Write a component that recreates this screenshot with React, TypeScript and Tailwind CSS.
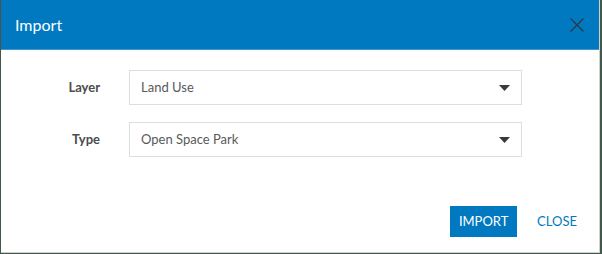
import { X } from 'lucide-react';

function SelectBox({ value }: { value: string }) {
  return (
    <div className="flex h-[35px] w-[393px] items-center justify-between border border-[#dedede] bg-white pl-[11px] pr-[11px]">
      <span className="text-[13px] text-[#595959]">{value}</span>
      <svg width="11" height="6" viewBox="0 0 11 6">
        <path d="M0 0 H11 L5.5 6 Z" fill="#3a3a3a" />
      </svg>
    </div>
  );
}

export default function App() {
  return (
    <div
      className="h-[254px] w-[602px] bg-[#41584a] pl-[1px]"
      style={{ fontFamily: 'Lato, "Open Sans", sans-serif' }}
    >
      <div className="flex h-[253px] w-[599px] flex-col border-r border-b border-[#cfcfcf] bg-white">
        <div className="flex h-[50px] items-center justify-between border-b border-[#3d98d0] bg-[#0079c1] pl-[14px] pr-[10px]">
          <span className="text-[16px] text-white">Import</span>
          <X className="h-6 w-6 text-[#2b3a44]" strokeWidth={1.4} />
        </div>

        <div className="flex flex-col gap-[17px] pl-[54px] pt-[20px]">
          <div className="flex items-center">
            <span className="w-[45px] text-right text-[13px] font-bold text-[#4c4c4c]">Layer</span>
            <div className="ml-[29px]">
              <SelectBox value="Land Use" />
            </div>
          </div>
          <div className="flex items-center">
            <span className="w-[45px] text-right text-[13px] font-bold text-[#4c4c4c]">Type</span>
            <div className="ml-[29px]">
              <SelectBox value="Open Space Park" />
            </div>
          </div>
        </div>

        <div className="mt-auto mb-[15px] flex items-center justify-end gap-[20px] pr-[22px]">
          <button className="h-[31px] w-[67px] bg-[#0079c1] text-[13px] text-white">IMPORT</button>
          <button className="text-[13px] text-[#0079c1]">CLOSE</button>
        </div>
      </div>
    </div>
  );
}
